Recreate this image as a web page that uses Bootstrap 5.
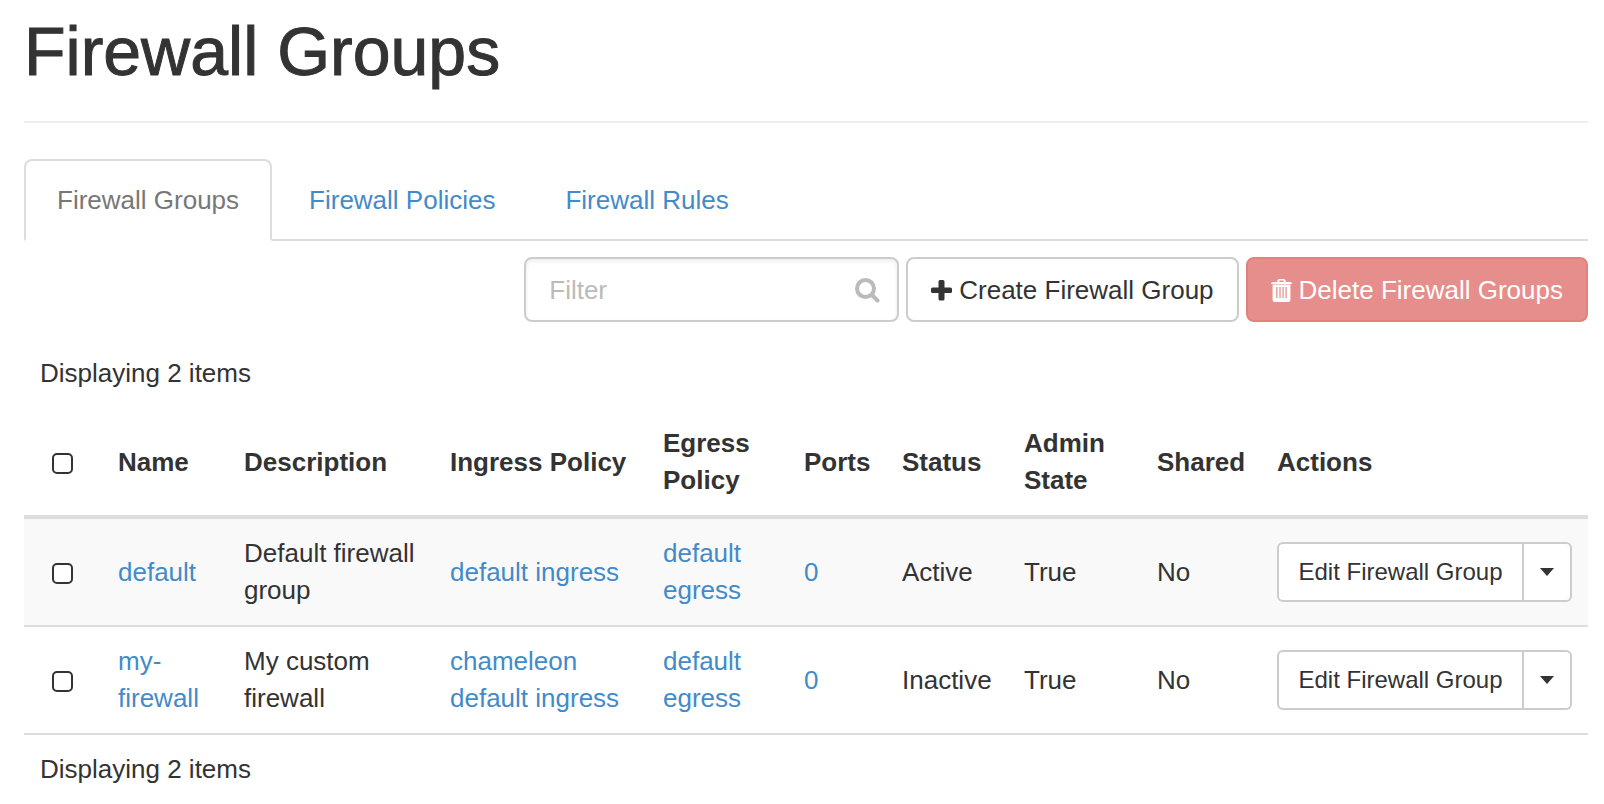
<!DOCTYPE html>
<html lang="en">
<head>
<meta charset="utf-8">
<meta name="viewport" content="width=device-width, initial-scale=1">
<title>Firewall Groups</title>
<link rel="stylesheet" href="https://cdn.jsdelivr.net/npm/bootstrap@5.3.0/dist/css/bootstrap.min.css">
<style>
  body { font-family: "Liberation Sans", Arial, sans-serif; font-size: 26px; line-height: 37px; color: #333; background: #fff; }
  a { color: #428bca; text-decoration: none; }
  a:hover { color: #2a6496; }
  .page { padding: 14px 16px 0 24px; }
  .page-title { font-size: 68px; line-height: 74px; font-weight: 500; -webkit-text-stroke: 1px #333; padding-bottom: 33px; margin-bottom: 36px; border-bottom: 2px solid #eee; }
  .nav-tabs { border-bottom: 2px solid #ddd; gap: 4px; --bs-nav-tabs-border-width: 2px; }
  .nav-tabs .nav-link { color: #428bca; padding: 21px 31px 20px; border: 2px solid transparent; border-radius: 8px 8px 0 0; margin-bottom: -2px; }
  .nav-tabs .nav-link.active { color: #777; border-color: #ddd #ddd #fff; }
  .toolbar { padding-top: 16px; gap: 7px; }
  .filter-box { flex: 0 1 375px; }
  .filter-box .form-control { font-size: 26px; line-height: 37px; height: 65px; padding: 13px 64px 11px 23px; border: 2px solid #ccc; border-radius: 8px; color: #333; box-shadow: inset 0 2px 4px rgba(0,0,0,.08); }
  .filter-box .form-control::placeholder { color: #bbb; }
  .filter-box svg { position: absolute; right: 19px; top: 21px; }
  .toolbar .btn { font-size: 26px; line-height: 37px; padding: 13px 23px 11px; gap: 7px; border: 2px solid #ccc; border-radius: 8px; white-space: nowrap; }
  .btn-plain { --bs-btn-color: #333; --bs-btn-bg: #fff; --bs-btn-hover-bg: #e6e6e6; --bs-btn-active-bg: #e6e6e6; }
  .toolbar .btn-danger { --bs-btn-disabled-bg: #d9534f; border-color: #d43f3a; }
  .count-line { padding: 0 16px; }
  .count-top { margin: 33px 0 17px; }
  .groups { table-layout: fixed; color: #333; margin: 0; }
  .groups > :not(caption) > * > * { padding: 16px; border-bottom: 2px solid #ddd; background: none; box-shadow: none; vertical-align: middle; }
  .groups > thead > tr > th { border-bottom-width: 4px; }
  .groups > tbody > tr:nth-child(odd) > td { background: #f9f9f9; }
  .groups .form-check-input { display: block; width: 21px; height: 21px; margin: 3px 0 0 12px; border: 2px solid #333; border-radius: 5px; background-color: #fff; }
  .c-check { width: 78px; } .c-name { width: 126px; } .c-desc { width: 206px; }
  .c-in { width: 213px; } .c-out { width: 141px; } .c-ports { width: 98px; }
  .c-status { width: 122px; } .c-admin { width: 133px; } .c-shared { width: 120px; } .c-act { width: 327px; }
  .groups .btn-group { display: flex; }
  .groups .btn { font-size: 24px; line-height: 36px; padding: 10px 19px; border: 2px solid #ccc; border-radius: 6px; white-space: nowrap; }
  .groups .btn:first-child { flex: 1 1 auto; border-top-right-radius: 0; border-bottom-right-radius: 0; }
  .groups .btn:last-child { flex: 0 0 48px; padding: 0; border-left: 0; margin-left: 0; border-top-left-radius: 0; border-bottom-left-radius: 0; }
  .groups .btn-group > .btn:not(:first-child) { margin-left: 0; }
  .groups .dropdown-toggle::after { margin: 0; vertical-align: 4px; border-top: 8px solid; border-left: 7px solid transparent; border-right: 7px solid transparent; }
</style>
</head>
<body>
<main class="page">
  <h1 class="page-title">Firewall Groups</h1>

  <ul class="nav nav-tabs">
    <li class="nav-item"><a class="nav-link active" aria-current="page" href="#">Firewall Groups</a></li>
    <li class="nav-item"><a class="nav-link" href="#">Firewall Policies</a></li>
    <li class="nav-item"><a class="nav-link" href="#">Firewall Rules</a></li>
  </ul>

  <div class="toolbar d-flex justify-content-end">
    <div class="filter-box position-relative">
      <input type="search" class="form-control" placeholder="Filter" aria-label="Filter">
      <svg width="25" height="25" viewBox="0 0 25 25" fill="none" stroke="#bbb" aria-hidden="true"><circle cx="10.5" cy="10.5" r="8.5" stroke-width="4"/><path d="M17 17l5.500 5.500" stroke-width="4" stroke-linecap="round"/></svg>
    </div>
    <button type="button" class="btn btn-plain d-flex align-items-center"><svg width="21" height="21" viewBox="0 0 21 21" fill="#333" aria-hidden="true"><path d="M9 0h3q1.500 0 1.500 1.500v6h6q1.500 0 1.500 1.500v2.500q0 1.500-1.500 1.500h-6v6q0 1.500-1.500 1.500H9q-1.500 0-1.500-1.500v-6h-6Q0 13 0 11.500V9q0-1.500 1.500-1.500h6v-6Q7.500 0 9 0z"/></svg>Create Firewall Group</button>
    <button type="button" class="btn btn-danger d-flex align-items-center" disabled><svg width="21" height="23" viewBox="0 0 20 23" preserveAspectRatio="none" aria-hidden="true"><path fill="#fff" fill-rule="evenodd" d="M6 3V1.500Q6.300 0 8 0h4q1.700 0 2 1.500V3h4.500q1 0 1.500 1.500V5H0v-.5Q.5 3 1.500 3zM8 3h4V1.500H8zM1.500 5.500h17V21q-.2 2-2 2h-13q-1.800 0-2-2zM5 8v11h1.200V8zM8 8v11h1.200V8zM10.900 8v11h1.200V8zM13.800 8v11H15V8z"/></svg>Delete Firewall Groups</button>
  </div>

  <p class="count-line count-top">Displaying 2 items</p>

  <table class="table groups">
    <colgroup>
      <col class="c-check"><col class="c-name"><col class="c-desc"><col class="c-in"><col class="c-out">
      <col class="c-ports"><col class="c-status"><col class="c-admin"><col class="c-shared"><col class="c-act">
    </colgroup>
    <thead>
      <tr>
        <th scope="col"><input class="form-check-input" type="checkbox" aria-label="Select all"></th>
        <th scope="col">Name</th><th scope="col">Description</th><th scope="col">Ingress Policy</th><th scope="col">Egress Policy</th>
        <th scope="col">Ports</th><th scope="col">Status</th><th scope="col">Admin State</th><th scope="col">Shared</th><th scope="col">Actions</th>
      </tr>
    </thead>
    <tbody>
      <tr>
        <td><input class="form-check-input" type="checkbox" aria-label="Select default"></td>
        <td><a href="#">default</a></td>
        <td>Default firewall group</td>
        <td><a href="#">default ingress</a></td>
        <td><a href="#">default egress</a></td>
        <td><a href="#">0</a></td>
        <td>Active</td>
        <td>True</td>
        <td>No</td>
        <td>
          <div class="btn-group">
            <button type="button" class="btn btn-plain">Edit Firewall Group</button>
            <button type="button" class="btn btn-plain dropdown-toggle dropdown-toggle-split" data-bs-toggle="dropdown" aria-expanded="false" aria-label="More actions"></button>
          </div>
        </td>
      </tr>
      <tr>
        <td><input class="form-check-input" type="checkbox" aria-label="Select my-firewall"></td>
        <td><a href="#">my-firewall</a></td>
        <td>My custom firewall</td>
        <td><a href="#">chameleon default ingress</a></td>
        <td><a href="#">default egress</a></td>
        <td><a href="#">0</a></td>
        <td>Inactive</td>
        <td>True</td>
        <td>No</td>
        <td>
          <div class="btn-group">
            <button type="button" class="btn btn-plain">Edit Firewall Group</button>
            <button type="button" class="btn btn-plain dropdown-toggle dropdown-toggle-split" data-bs-toggle="dropdown" aria-expanded="false" aria-label="More actions"></button>
          </div>
        </td>
      </tr>
    </tbody>
  </table>
  <p class="count-line pt-3 mb-0">Displaying 2 items</p>
</main>
<script src="https://cdn.jsdelivr.net/npm/bootstrap@5.3.0/dist/js/bootstrap.bundle.min.js"></script>
</body>
</html>
